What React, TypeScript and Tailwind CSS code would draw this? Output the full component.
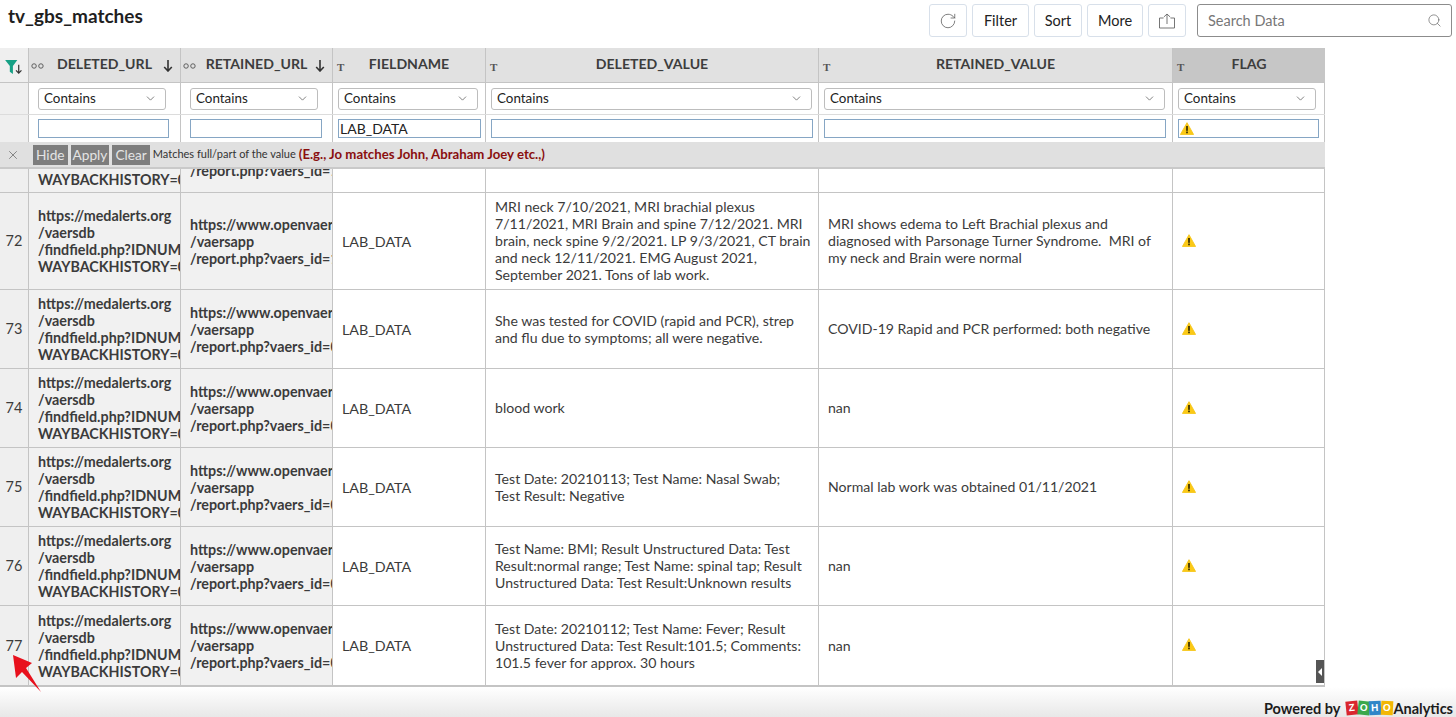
import React from "react";
import { ChevronDown, RotateCw, Search, X } from "lucide-react";

const GRID = "grid grid-cols-[29px_152px_152px_153px_333px_354px_152px]";
const BORDER = "border-r border-[#c4c4c4]";

const Warn = ({ className = "" }: { className?: string }) => (
  <svg viewBox="0 0 16 15" className={`w-[14px] h-[13px] ${className}`}>
    <path d="M8 .8 15.6 14.4H.4Z" fill="#fbc916" stroke="#f5c518" strokeLinejoin="round" />
    <rect x="7" y="4.6" width="2" height="5.6" fill="#3a3000" />
    <rect x="7" y="11" width="2" height="2" fill="#3a3000" />
  </svg>
);

const LinkIcon = () => (
  <svg viewBox="0 0 14 6" className="w-[13px] h-[6px] shrink-0 text-[#555]" fill="none" stroke="currentColor" strokeWidth="1">
    <circle cx="3.3" cy="3" r="2.4" />
    <circle cx="10.7" cy="3" r="2.4" />
  </svg>
);

const TextIcon = () => (
  <span className="font-['Liberation_Serif',serif] font-bold text-[11px] text-[#555] shrink-0">T</span>
);

const Header = ({ label, link, flag }: { label: string; link?: boolean; flag?: boolean }) => (
  <div className={`relative flex items-center justify-center h-full px-[24px] pb-[3px] ${flag ? "bg-[#c6c6c6]" : "bg-[#e1e1e1]"} ${flag ? "" : BORDER}`}>
    <span className="absolute left-[2px] top-[13px] flex h-[10px] items-center">{link ? <LinkIcon /> : <span className="ml-[2px]"><TextIcon /></span>}</span>
    <span className="font-bold text-[14.1px] text-[#3d3d3d] whitespace-nowrap">{label}</span>
    {link && (
      <svg viewBox="0 0 10 13" className="absolute right-[7px] top-[11px] w-[10px] h-[13px]" fill="none" stroke="#333" strokeWidth="1.6">
        <path d="M5 1v11M1.2 8 5 12l3.8-4" />
      </svg>
    )}
  </div>
);

const Contains = ({ border = true, pad }: { border?: boolean; pad: string }) => (
  <div className={`h-full flex items-center ${pad} ${border ? BORDER : ""}`}>
    <div className="flex items-center justify-between w-full h-[22px] rounded-[3px] border border-[#bdbdbd] bg-white pl-[5px] pr-[8px] text-[13.4px] text-[#222]">
      <span>Contains</span>
      <ChevronDown size={13} strokeWidth={1.5} className="text-[#666]" />
    </div>
  </div>
);

const FilterInput = ({ value, warn, border = true, pad }: { value?: string; warn?: boolean; border?: boolean; pad: string }) => (
  <div className={`h-full flex items-center ${pad} ${border ? BORDER : ""}`}>
    <div className="flex items-center w-full h-[19px] border border-[#86a6c4] bg-white pl-[1px] text-[14px] text-[#222]">
      {value}
      {warn && <Warn />}
    </div>
  </div>
);

const Url1 = () => (
  <div className="leading-[17px]">
    <div>https://medalerts.org</div>
    <div>/vaersdb</div>
    <div>/findfield.php?IDNUMBER=</div>
    <div>WAYBACKHISTORY=0</div>
  </div>
);

const Url2 = ({ id }: { id: string }) => (
  <div className="leading-[17px]">
    <div>https://www.openvaers.com</div>
    <div>/vaersapp</div>
    <div>/report.php?vaers_id={id}</div>
  </div>
);

// line breaks follow the reference, the cells are pre-line
const rows = [
  {
    n: 72, h: "h-[97px]", id: "1",
    del: "MRI neck 7/10/2021, MRI brachial plexus\n7/11/2021, MRI Brain and spine 7/12/2021. MRI\nbrain, neck spine 9/2/2021. LP 9/3/2021, CT brain\nand neck 12/11/2021. EMG August 2021,\nSeptember 2021. Tons of lab work.",
    ret: "MRI shows edema to Left Brachial plexus and\ndiagnosed with Parsonage Turner Syndrome.  MRI of\nmy neck and Brain were normal",
  },
  {
    n: 73, h: "h-[79px]", id: "0",
    del: "She was tested for COVID (rapid and PCR), strep\nand flu due to symptoms; all were negative.",
    ret: "COVID-19 Rapid and PCR performed: both negative",
  },
  { n: 74, h: "h-[79px]", id: "0", del: "blood work", ret: "nan" },
  {
    n: 75, h: "h-[79px]", id: "0",
    del: "Test Date: 20210113; Test Name: Nasal Swab;\nTest Result: Negative",
    ret: "Normal lab work was obtained 01/11/2021",
  },
  {
    n: 76, h: "h-[79px]", id: "0",
    del: "Test Name: BMI; Result Unstructured Data: Test\nResult:normal range; Test Name: spinal tap; Result\nUnstructured Data: Test Result:Unknown results",
    ret: "nan",
  },
  {
    n: 77, h: "h-[79px]", id: "0",
    del: "Test Date: 20210112; Test Name: Fever; Result\nUnstructured Data: Test Result:101.5; Comments:\n101.5 fever for approx. 30 hours",
    ret: "nan",
  },
];

const cell = `flex items-center overflow-hidden h-full ${BORDER}`;

export default function App() {
  return (
    <div className="relative h-[717px] w-[1456px] overflow-hidden bg-white font-['Lato',sans-serif] text-[14.3px] text-[#3b3b3b]">
      {/* Top bar */}
      <div className="flex items-start justify-between h-[48px] pl-[8px] pr-[4px]">
        <h1 className="mt-[3px] text-[19px] leading-[26px] font-bold text-[#1f1f1f]">tv_gbs_matches</h1>
        <div className="flex items-center gap-[5px] mt-[4px] text-[14.5px] text-[#222]">
          <button className="flex items-center justify-center w-[38px] h-[33px] rounded-[3px] border border-[#d8e0ea] text-[#555]">
            <RotateCw size={18} strokeWidth={1} />
          </button>
          <button className="w-[57px] h-[33px] rounded-[3px] border border-[#d8e0ea]">Filter</button>
          <button className="w-[48px] h-[33px] rounded-[3px] border border-[#d8e0ea]">Sort</button>
          <button className="w-[56px] h-[33px] rounded-[3px] border border-[#d8e0ea]">More</button>
          <button className="flex items-center justify-center w-[38px] h-[33px] rounded-[3px] border border-[#d8e0ea]">
            <svg viewBox="0 0 18 16" className="w-[18px] h-[16px]" fill="none" stroke="#666" strokeWidth="0.9">
              <path d="M5.5 5H1.5v10h15V5h-4M9 11V1M5.8 4 9 1l3.2 3" />
            </svg>
          </button>
          <div className="flex items-center justify-between ml-[6px] w-[255px] h-[33px] rounded-[3px] border border-[#8c8c8c] pl-[10px] pr-[9px]">
            <span className="text-[#777]">Search Data</span>
            <Search size={15} strokeWidth={1} className="text-[#555]" />
          </div>
        </div>
      </div>

      {/* Table */}
      <div className="w-[1325px] border-b-2 border-[#c4c4c4]">
        <div className={`${GRID} h-[35px] border-b border-[#c4c4c4]`}>
          <div className={`flex items-center justify-center pl-[1px] bg-[#efefef] ${BORDER}`}>
            <svg viewBox="0 0 20 16" className="w-[19px] h-[15px] mt-[5px]">
              <path d="M0 0H13L8.3 6.5V15L5 12.5V6.5Z" fill="#16a085" />
              <path d="M14.5 5v9M11.6 11l2.9 3 2.9-3" fill="none" stroke="#333" strokeWidth="1.3" />
            </svg>
          </div>
          <Header label="DELETED_URL" link />
          <Header label="RETAINED_URL" link />
          <Header label="FIELDNAME" />
          <Header label="DELETED_VALUE" />
          <Header label="RETAINED_VALUE" />
          <Header label="FLAG" flag />
        </div>

        <div className={`${GRID} h-[32px] border-b border-[#dcdcdc]`}>
          <div className={`bg-[#efefef] ${BORDER}`} />
          <Contains pad="pl-[9px] pr-[14px]" />
          <Contains pad="pl-[9px] pr-[14px]" />
          <Contains pad="pl-[5px] pr-[7px]" />
          <Contains pad="pl-[5px] pr-[6px]" />
          <Contains pad="pl-[5px] pr-[7px]" />
          <Contains pad="pl-[5px] pr-[8px] border-r border-[#c4c4c4]" border={false} />
        </div>

        <div className={`${GRID} h-[27px]`}>
          <div className={`bg-[#efefef] ${BORDER}`} />
          <FilterInput pad="pl-[9px] pr-[11px]" />
          <FilterInput pad="pl-[9px] pr-[10px]" />
          <FilterInput pad="pl-[5px] pr-[4px]" value="LAB_DATA" />
          <FilterInput pad="pl-[5px] pr-[5px]" />
          <FilterInput pad="pl-[5px] pr-[6px]" />
          <FilterInput pad="pl-[5px] pr-[5px] border-r border-[#c4c4c4]" warn border={false} />
        </div>

        {/* Filter hint bar */}
        <div className="relative z-10 flex items-center h-[27px] bg-[#e0e0e0] border-b-2 border-[#c9c9c9]">
          <X size={14} strokeWidth={1} className="ml-[6px] mr-[13px] text-[#444]" />
          <div className="flex items-center gap-[3px] text-[13.7px] text-[#e4e4e4]">
            <span className="bg-[#7d7d7d] h-[20px] leading-[20px] px-[3px]">Hide</span>
            <span className="bg-[#7d7d7d] h-[20px] leading-[20px] px-[2px]">Apply</span>
            <span className="bg-[#7d7d7d] h-[20px] leading-[20px] px-[3px]">Clear</span>
          </div>
          <span className="ml-[3px] text-[11px] text-[#333]">Matches full/part of the value</span>
          <span className="ml-[3px] text-[13.2px] font-bold text-[#8a0f0f]">(E.g., Jo matches John, Abraham Joey etc.,)</span>
        </div>

        {/* Row cut off by the hint bar */}
        <div className={`${GRID} h-[24px] border-b border-[#c4c4c4]`}>
          <div className={`bg-[#efefef] ${BORDER}`} />
          <div className={`bg-[#f1f1f1] overflow-hidden flex items-end pl-[9px] pb-[4px] font-bold leading-[17px] whitespace-nowrap ${BORDER}`}>WAYBACKHISTORY=0</div>
          <div className={`bg-[#f1f1f1] overflow-hidden flex items-end pl-[9px] pb-[13px] font-bold leading-[17px] whitespace-nowrap ${BORDER}`}>/report.php?vaers_id=1</div>
          <div className={BORDER} />
          <div className={BORDER} />
          <div className={BORDER} />
          <div className={BORDER} />
        </div>

        {rows.map((r) => (
          <div key={r.n} className={`${GRID} ${r.h} border-b border-[#c4c4c4] last:border-b-0`}>
            <div className={`flex items-center justify-center bg-[#efefef] text-[14.5px] ${BORDER}`}>{r.n}</div>
            <div className={`${cell} bg-[#f1f1f1] pl-[9px] font-bold whitespace-nowrap`}><Url1 /></div>
            <div className={`${cell} bg-[#f1f1f1] pl-[9px] font-bold whitespace-nowrap`}><Url2 id={r.id} /></div>
            <div className={`${cell} pl-[9px] leading-[17px]`}>LAB_DATA</div>
            <div className={`${cell} pl-[9px] pb-[1px] text-[14.1px] leading-[17px] whitespace-pre-wrap`}><div>{r.del}</div></div>
            <div className={`${cell} pl-[9px] pb-[1px] text-[14.1px] leading-[17px] whitespace-pre-wrap`}><div>{r.ret}</div></div>
            <div className={`${cell} pl-[9px]`}><Warn className="-mt-[2px]" /></div>
          </div>
        ))}
      </div>

      {/* Panel handle */}
      <div className="absolute left-[1316px] top-[660px] flex items-center justify-center w-[8px] h-[23px] bg-[#555]">
        <span className="border-y-[4px] border-r-[4px] border-y-transparent border-r-white" />
      </div>

      {/* Footer */}
      <div className="absolute inset-x-0 bottom-0 flex items-start justify-end h-[30px] bg-gradient-to-b from-white to-[#e8e8e8] pr-[3px] pt-[13px] text-[14.5px] leading-[17px] font-bold text-[#1c1c1c]">
        <span>Powered by</span>
        <span className="flex items-center ml-[6px] mr-[1px] mt-[1px] font-['Liberation_Sans',sans-serif] text-[10px] leading-[14px] text-white">
          <span className="w-[11.5px] h-[14px] bg-[#d9262e] text-center -rotate-6">Z</span>
          <span className="w-[11.5px] h-[14px] bg-[#3aa84c] text-center rotate-6">O</span>
          <span className="w-[11.5px] h-[14px] bg-[#2f86c8] text-center -rotate-3">H</span>
          <span className="w-[11.5px] h-[14px] bg-[#f2b705] text-center rotate-3">O</span>
        </span>
        <span>Analytics</span>
      </div>

      {/* Annotation arrow */}
      <svg className="absolute left-0 top-[650px] w-[50px] h-[50px]" viewBox="0 650 50 50">
        <path d="M13 655 32 663 26 668 41 692 22 672 16 678Z" fill="#e8101c" />
      </svg>
    </div>
  );
}
